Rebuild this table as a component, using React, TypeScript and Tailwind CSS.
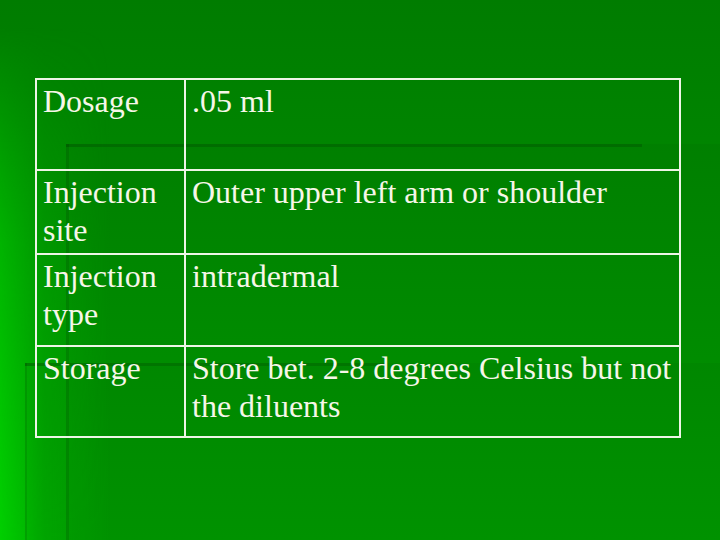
import React from "react";

const rows: { label: string; value: string; h: string; border: boolean }[] = [
  { label: "Dosage", value: ".05 ml", h: "h-[89px]", border: false },
  { label: "Injection site", value: "Outer upper left arm or shoulder", h: "h-[84px]", border: true },
  { label: "Injection type", value: "intradermal", h: "h-[92px]", border: true },
  { label: "Storage", value: "Store bet. 2-8 degrees Celsius but not the diluents", h: "h-[91px]", border: true },
];

export default function App() {
  return (
    <div className="relative w-[720px] h-[540px] overflow-hidden bg-[linear-gradient(to_bottom,#007c00,#008a00_45%,#009c00)]">
      {/* decorative background shapes (slide template) */}
      <div className="absolute left-0 top-0 bottom-0 w-[110px] bg-[linear-gradient(to_right,#00cf00,rgba(0,200,0,0.35)_40%,transparent)] [mask-image:linear-gradient(to_bottom,transparent_5%,rgba(0,0,0,0.6)_45%,black)]" />
      <div className="absolute left-[66px] top-[144px] right-0 bottom-0 bg-black/[0.03]" />
      <div className="absolute left-[66px] top-[144px] w-[576px] h-[3px] bg-[#006800]/80" />
      <div className="absolute left-[66px] top-[144px] bottom-0 w-[3px] bg-black/10" />
      <div className="absolute left-[25px] top-[363px] right-0 bottom-0 bg-black/[0.03]" />
      <div className="absolute left-[25px] top-[363px] w-[360px] h-[3px] bg-[#006e00]/70" />
      <div className="absolute left-[25px] top-[363px] bottom-0 w-[2px] bg-black/10" />

      <div className="relative pt-[78px] pl-[35px]">
        <div
          className="w-[646px] border-2 border-[#eef5e6] text-[#f6f6e8] text-[32px] leading-[38.4px]"
          style={{ fontFamily: '"Liberation Serif", "Times New Roman", serif' }}
        >
          {rows.map((r, i) => (
            <div
              key={i}
              className={`flex ${r.h} ${r.border ? "border-t-2 border-[#eef5e6]" : ""}`}
            >
              <div className="w-[147px] shrink-0 pl-[6px] pt-[2px]">{r.label}</div>
              <div className="flex-1 border-l-2 border-[#eef5e6] pl-[6px] pt-[2px]">{r.value}</div>
            </div>
          ))}
        </div>
      </div>
    </div>
  );
}
